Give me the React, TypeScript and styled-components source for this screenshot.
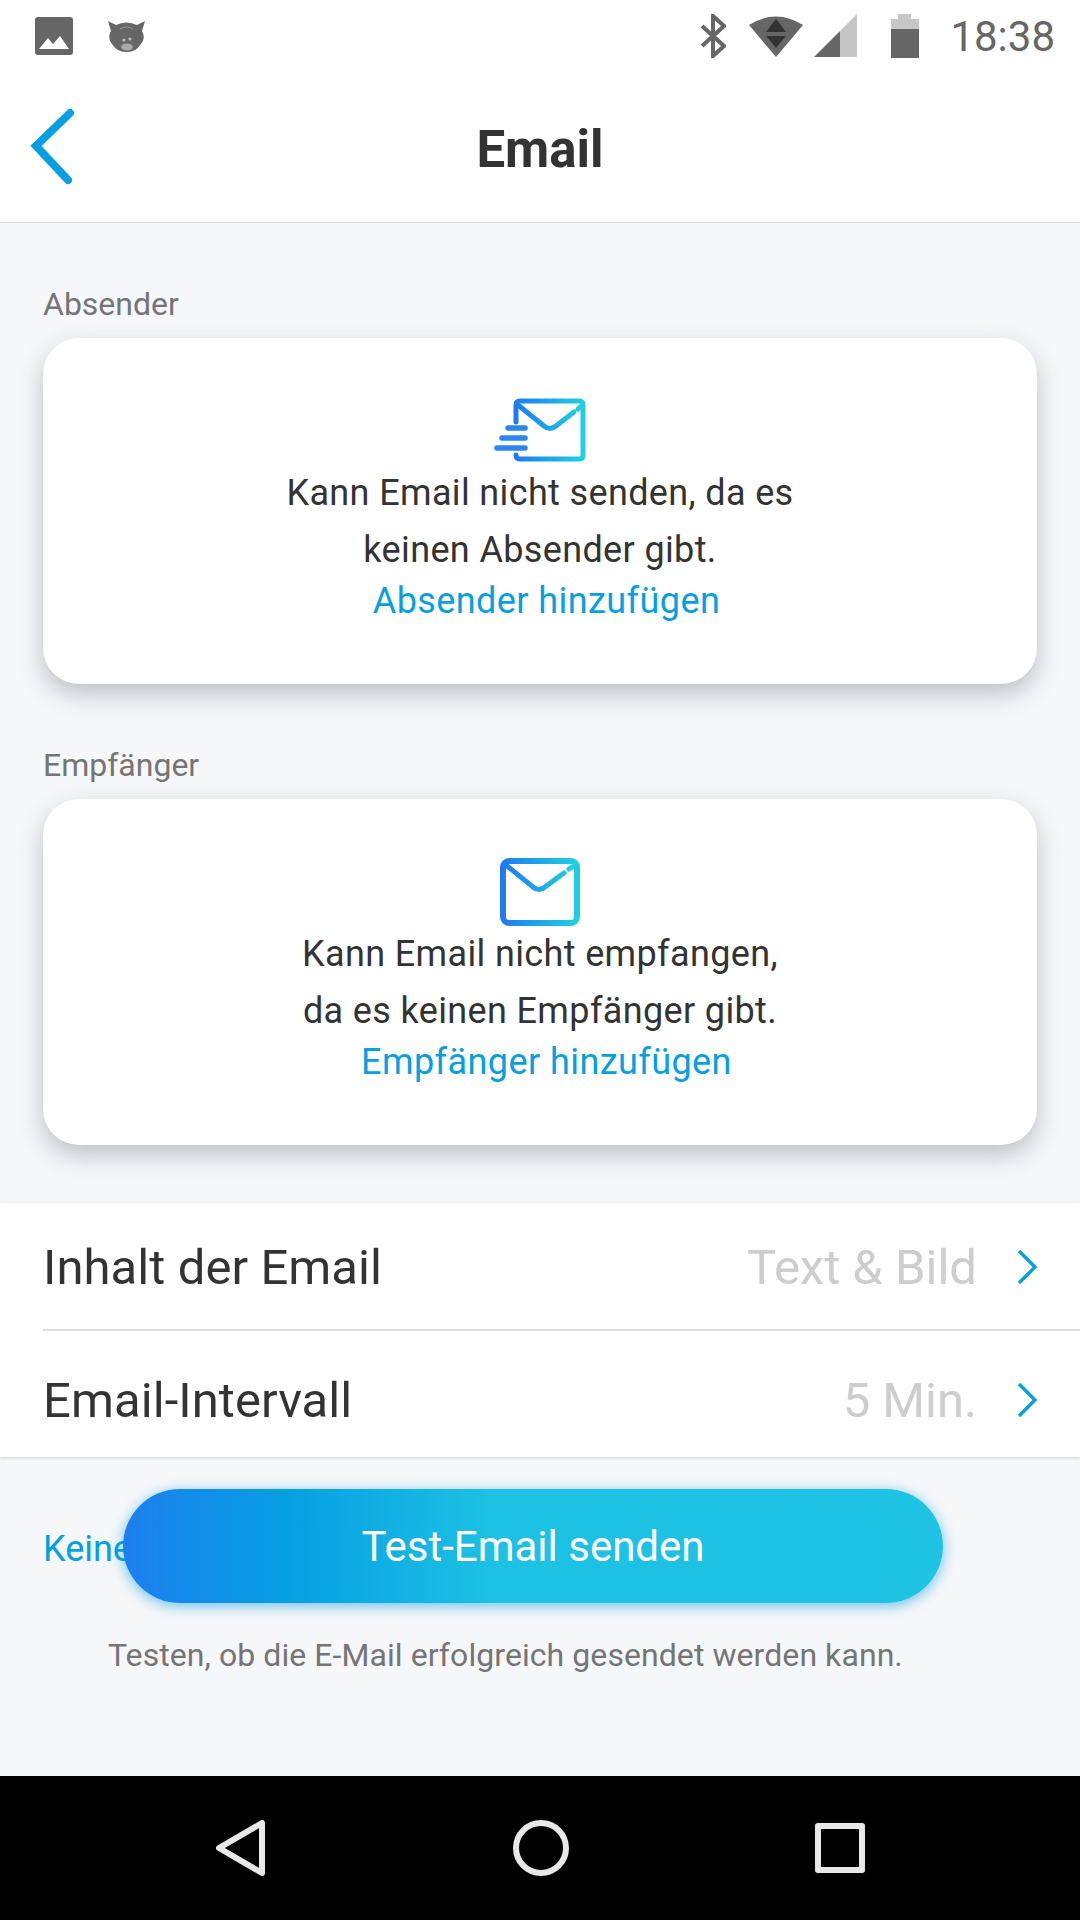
import { createGlobalStyle, styled } from "styled-components";

const GlobalStyle = createGlobalStyle`
    html, body {
        margin: 0;
        padding: 0;
        background: #f6f7f9;
    }
    * {
        box-sizing: border-box;
    }
`;

function StatusIcons() {
    return (
        <StatusRight>
            <StatusGlyph $gap={23}>
                <svg width="26" height="44" viewBox="0 0 26 44">
                    <path d="M2 12 L24 32 L13 42 V2 L24 12 L2 32" fill="none" stroke="#666" strokeWidth="4" />
                </svg>
            </StatusGlyph>
            <StatusGlyph $gap={11}>
                <svg width="54" height="44" viewBox="0 0 54 44">
                    <path d="M0 11 Q27 -6 54 11 L27 43 Z" fill="#666" />
                    <path d="M27 5 L17 18 H37 Z M17 22 H37 L27 34 Z" fill="#333" />
                </svg>
            </StatusGlyph>
            <StatusGlyph $gap={34}>
                <svg width="43" height="44" viewBox="0 0 43 44">
                    <path d="M0 43 L26 17 V43 Z" fill="#666" />
                    <path d="M26 17 L43 0 V43 H26 Z" fill="#c6c6c6" />
                </svg>
            </StatusGlyph>
            <StatusGlyph $gap={31}>
                <svg width="28" height="44" viewBox="0 0 28 44">
                    <path d="M0 5 H7 V0 H20 V5 H28 V15 H0 Z" fill="#c6c6c6" />
                    <rect x="0" y="15" width="28" height="29" fill="#666" />
                </svg>
            </StatusGlyph>
            <Clock>18:38</Clock>
        </StatusRight>
    );
}

function Chevron() {
    return (
        <svg width="24" height="38" viewBox="0 0 24 38">
            <path d="M4 3 L20 19 L4 35" fill="none" stroke="#069fe3" strokeWidth="3.4" />
        </svg>
    );
}

function SendIcon() {
    return (
        <svg width="92" height="64" viewBox="0 0 92 64">
            <defs>
                <linearGradient id="sendGrad" x1="0" x2="1" y1="0" y2="0">
                    <stop offset="0" stopColor="#1f7cf0" />
                    <stop offset="1" stopColor="#1fcfe0" />
                </linearGradient>
            </defs>
            <path
                d="M22 24 V7 Q22 3 26 3 H85 Q89 3 89 7 V57 Q89 61 85 61 H26 Q22 61 22 57"
                fill="none"
                stroke="url(#sendGrad)"
                strokeWidth="5"
                strokeLinecap="round"
            />
            <path
                d="M24 7 L50 28 Q56 33 62 28 L80 14 M84 11 L86 9"
                fill="none"
                stroke="url(#sendGrad)"
                strokeWidth="5"
                strokeLinecap="round"
            />
            <g stroke="#2a86f0" strokeWidth="5.5" strokeLinecap="round">
                <path d="M14 30 H31" />
                <path d="M8 40 H31" />
                <path d="M3 50 H31" />
            </g>
        </svg>
    );
}

function MailIcon() {
    return (
        <svg width="80" height="68" viewBox="0 0 80 68">
            <defs>
                <linearGradient id="mailGrad" x1="0" x2="1" y1="0" y2="0">
                    <stop offset="0" stopColor="#1f7cf0" />
                    <stop offset="1" stopColor="#1fcfe0" />
                </linearGradient>
            </defs>
            <rect x="3" y="3" width="74" height="62" rx="6" fill="none" stroke="url(#mailGrad)" strokeWidth="6" />
            <path
                d="M6 7 L33 29 Q39 34 45 29 L64 15 M69 11 L72 9"
                fill="none"
                stroke="url(#mailGrad)"
                strokeWidth="5"
                strokeLinecap="round"
            />
        </svg>
    );
}

function NavBack() {
    return (
        <svg width="50" height="56" viewBox="0 0 50 56">
            <path d="M46 3 V53 L3 28 Z" fill="none" stroke="#e8e8e8" strokeWidth="6" strokeLinejoin="round" />
        </svg>
    );
}

export default function App() {
    return (
        <Screen>
            <GlobalStyle />
            <StatusBar>
                <StatusLeft>
                    <svg width="38" height="38" viewBox="0 0 38 38">
                        <rect width="38" height="38" rx="3" fill="#666" />
                        <path d="M4 32 L13 21 L18 27 L25 19 L34 32 Z" fill="#fff" />
                    </svg>
                    <svg width="37" height="33" viewBox="0 0 37 33">
                        <path
                            d="M0 1 L8 5 Q18 0 29 5 L37 1 L34 11 Q38 18 33 24 Q27 33 18 32 Q9 32 4 24 Q-1 18 3 11 Z"
                            fill="#666"
                        />
                        <path d="M12 9 Q19 5 25 9" fill="none" stroke="#999" strokeWidth="1" />
                        <ellipse cx="19" cy="27" rx="6" ry="3.5" fill="#aaa" />
                        <circle cx="16" cy="20" r="1.6" fill="#bbb" />
                        <circle cx="22" cy="19" r="1.6" fill="#bbb" />
                    </svg>
                </StatusLeft>
                <StatusIcons />
            </StatusBar>

            <Header>
                <BackButton>
                    <svg width="46" height="84" viewBox="0 0 46 84">
                        <path d="M41 8 L7 41 L39 75" fill="none" stroke="#069fe3" strokeWidth="8" strokeLinecap="round" />
                    </svg>
                </BackButton>
                <Title>Email</Title>
            </Header>

            <Content>
                <SectionLabel>Absender</SectionLabel>
                <Card>
                    <CardIcon $top={1}>
                        <SendIcon />
                    </CardIcon>
                    <CardText>Kann Email nicht senden, da es</CardText>
                    <CardText>keinen Absender gibt.</CardText>
                    <CardLink>Absender hinzufügen</CardLink>
                </Card>

                <SectionLabel $top={63}>Empfänger</SectionLabel>
                <Card>
                    <CardIcon $top={0}>
                        <MailIcon />
                    </CardIcon>
                    <CardText>Kann Email nicht empfangen,</CardText>
                    <CardText>da es keinen Empfänger gibt.</CardText>
                    <CardLink>Empfänger hinzufügen</CardLink>
                </Card>
            </Content>

            <List>
                <Row>
                    <RowLabel>Inhalt der Email</RowLabel>
                    <RowValue>Text &amp; Bild</RowValue>
                    <Chevron />
                </Row>
                <Row $last>
                    <RowLabel>Email-Intervall</RowLabel>
                    <RowValue>5 Min.</RowValue>
                    <Chevron />
                </Row>
            </List>

            <Footer>
                <KeineLink>Keine</KeineLink>
                <TestButton>Test-Email senden</TestButton>
                <Caption>Testen, ob die E-Mail erfolgreich gesendet werden kann.</Caption>
            </Footer>

            <NavBar>
                <NavBack />
                <NavCircle />
                <NavSquare />
            </NavBar>
        </Screen>
    );
}

const Screen = styled.div`
    width: 1080px;
    height: 1920px;
    display: flex;
    flex-direction: column;
    overflow: hidden;
    background: #f6f7f9;
    font-family: Roboto, "Liberation Sans", sans-serif;
`;

const StatusBar = styled.div`
    height: 72px;
    padding: 0 25px 0 35px;
    display: flex;
    align-items: center;
    justify-content: space-between;
    background: #fff;
`;

const StatusLeft = styled.div`
    display: flex;
    align-items: center;
    gap: 35px;
`;

const StatusRight = styled.div`
    display: flex;
    align-items: center;
`;

const StatusGlyph = styled.div<{ $gap: number }>`
    line-height: 0;
    margin-right: ${(props) => props.$gap}px;
`;

const Clock = styled.span`
    font-size: 42px;
    color: #666;
`;

const Header = styled.div`
    height: 151px;
    position: relative;
    display: flex;
    align-items: center;
    justify-content: center;
    background: #fff;
    border-bottom: 1px solid #dedede;
`;

const BackButton = styled.div`
    position: absolute;
    left: 29px;
    top: 33px;
    line-height: 0;
`;

const Title = styled.div`
    font-size: 51px;
    font-weight: 700;
    color: #333;
    margin-top: 5px;
`;

const Content = styled.div`
    padding: 0 43px;
    height: 980px;
    flex: none;
    display: flex;
    flex-direction: column;
`;

const SectionLabel = styled.div<{ $top?: number }>`
    font-size: 32px;
    line-height: 36px;
    color: #757575;
    margin-top: ${(props) => props.$top ?? 63}px;
    margin-bottom: 16px;
`;

const Card = styled.div`
    height: 346px;
    flex: none;
    padding-top: 59px;
    display: flex;
    flex-direction: column;
    align-items: center;
    background: #fff;
    border-radius: 36px;
    box-shadow: 0 10px 24px rgba(60, 65, 75, 0.3);
`;

const CardIcon = styled.div<{ $top: number }>`
    height: 68px;
    line-height: 0;
    padding-top: ${(props) => props.$top}px;
`;

const CardText = styled.div`
    font-size: 36px;
    letter-spacing: 0.36px;
    line-height: 57px;
    color: #333;
`;

const CardLink = styled.div`
    font-size: 36px;
    letter-spacing: 0.42px;
    line-height: 44px;
    color: #069fe3;
    margin-left: 13px;
`;

const List = styled.div`
    height: 254px;
    flex: none;
    background: #fff;
    padding-left: 43px;
    box-shadow: 0 1px 3px rgba(0, 0, 0, 0.15);
`;

const Row = styled.div<{ $last?: boolean }>`
    height: ${(props) => (props.$last ? 126 : 128)}px;
    display: flex;
    align-items: center;
    padding-right: 41px;
    padding-top: ${(props) => (props.$last ? 12 : 2)}px;
    border-bottom: ${(props) => (props.$last ? "0" : "2px solid #dedede")};
`;

const RowLabel = styled.div`
    flex: 1;
    font-size: 49px;
    letter-spacing: 0.08px;
    color: #333;
`;

const RowValue = styled.div`
    font-size: 49px;
    color: #cdcdcd;
    margin-right: 38px;
`;

const Footer = styled.div`
    position: relative;
    flex: 1;
    padding: 67px 43px 0;
`;

const KeineLink = styled.div`
    font-size: 36px;
    line-height: 50px;
    color: #069fe3;
`;

const TestButton = styled.div`
    position: absolute;
    left: 123px;
    top: 32px;
    width: 820px;
    height: 114px;
    padding-top: 1px;
    display: flex;
    align-items: center;
    justify-content: center;
    border-radius: 57px;
    font-size: 42px;
    color: #fff;
    background: linear-gradient(90deg, #1c7fee 0%, #069fe3 20%, #1dc1e3 45%, #1ec2e3 100%);
    box-shadow: 0 3px 14px rgba(6, 159, 227, 0.6);
`;

const Caption = styled.div`
    margin-top: 61px;
    margin-left: 65px;
    font-size: 32px;
    letter-spacing: 0.07px;
    line-height: 40px;
    color: #757575;
`;

const NavBar = styled.div`
    height: 144px;
    flex: none;
    padding: 0 215px 0 216px;
    display: flex;
    align-items: center;
    justify-content: space-between;
    background: #000;
`;

const NavCircle = styled.div`
    width: 56px;
    height: 56px;
    border-radius: 50%;
    border: 6px solid #e8e8e8;
`;

const NavSquare = styled.div`
    width: 50px;
    height: 50px;
    border-radius: 3px;
    border: 6px solid #e8e8e8;
`;
